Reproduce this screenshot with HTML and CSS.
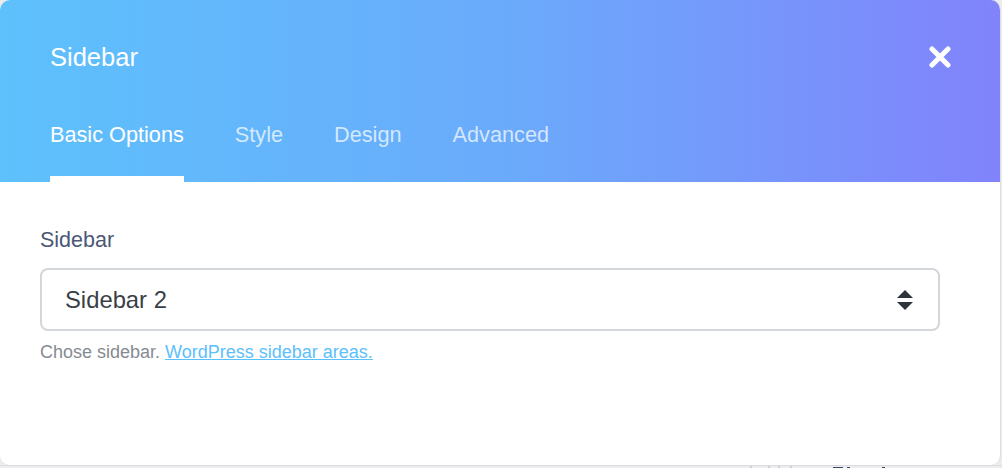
FILE: index.html
```html
<!DOCTYPE html>
<html>
<head>
<meta charset="utf-8">
<link rel="stylesheet" href="styles.css">
</head>
<body>
<div class="backdrop">
  <div class="behind">
    <span class="tick t1"></span><span class="tick t2"></span><span class="tick t3"></span><span class="tick t4"></span>
    <span class="ink i1"></span><span class="ink i2"></span><span class="ink i3"></span>
  </div>
  <div class="modal">
    <div class="header">
      <div class="title-row">
        <div class="title">Sidebar</div>
        <svg class="close" width="22" height="22" viewBox="0 0 22 22"><path d="M3 3 L19 19 M19 3 L3 19" stroke="#fff" stroke-width="5" stroke-linecap="round" fill="none"/></svg>
      </div>
      <div class="tabs">
        <div class="tab active">Basic Options</div>
        <div class="tab">Style</div>
        <div class="tab">Design</div>
        <div class="tab">Advanced</div>
      </div>
    </div>
    <div class="body">
      <div class="label">Sidebar</div>
      <div class="select">
        <span class="select-value">Sidebar 2</span>
        <svg class="arrows" width="18" height="22" viewBox="0 0 18 22"><path d="M9 1 L17 9 L1 9 Z M1 13 L17 13 L9 21 Z" fill="#2f343b"/></svg>
      </div>
      <div class="help">Chose sidebar. <a class="link" href="#">WordPress sidebar areas.</a></div>
    </div>
  </div>
</div>
</body>
</html>
```
FILE: styles.css
```css
html, body {
  margin: 0;
  padding: 0;
}
body {
  width: 1002px;
  height: 468px;
  overflow: hidden;
  background: #ececee;
  font-family: "Liberation Sans", Arial, sans-serif;
}
.backdrop {
  position: relative;
  width: 1002px;
  height: 468px;
}
.behind {
  position: absolute;
  left: 0;
  top: 465px;
  width: 1002px;
  height: 3px;
  border-top: 1px solid #dcdce0;
}
.tick {
  position: absolute;
  top: 0;
  width: 2px;
  height: 3px;
  background: #cfcfd4;
}
.t1 { left: 750px; }
.t2 { left: 768px; }
.t3 { left: 778px; }
.t4 { left: 790px; }
.ink {
  position: absolute;
  top: 1px;
  height: 2px;
  background: #3b4a6b;
}
.i1 { left: 833px; width: 10px; }
.i2 { left: 847px; width: 3px; }
.i3 { left: 882px; width: 3px; }
.modal {
  position: relative;
  width: 1000px;
  height: 465px;
  background: #fff;
  border-radius: 10px;
  overflow: hidden;
  border-right: 1px solid #dedede;
}
.header {
  height: 182px;
  background: linear-gradient(to right, #5dc1fc 0%, #6aabfb 50%, #8183fb 100%);
  padding: 0 50px;
  box-sizing: border-box;
  display: flex;
  flex-direction: column;
}
.title-row {
  height: 114px;
  display: flex;
  align-items: center;
  justify-content: space-between;
}
.title {
  color: #fff;
  font-size: 25.5px;
  line-height: 30px;
}
.close {
  margin-right: -1px;
  display: block;
}
.tabs {
  display: flex;
  gap: 51px;
  height: 68px;
}
.tab {
  color: rgba(255, 255, 255, 0.72);
  font-size: 21.7px;
  line-height: 26px;
  padding-top: 8px;
  padding-bottom: 28px;
  border-bottom: 6px solid transparent;
}
.tab.active {
  color: #fff;
  border-bottom-color: #fff;
}
.body {
  padding: 46px 40px 0;
}
.label {
  color: #4b5876;
  font-size: 21.5px;
  line-height: 24px;
}
.select {
  margin-top: 16px;
  width: 900px;
  height: 63px;
  box-sizing: border-box;
  border: 2px solid #d3d6db;
  border-radius: 8px;
  display: flex;
  align-items: center;
  justify-content: space-between;
  padding: 0 24px 0 23px;
}
.select-value {
  color: #3a3f47;
  font-size: 23.8px;
}
.arrows {
  display: block;
}
.help {
  margin-top: 10px;
  line-height: 22px;
  font-size: 18px;
  color: #868b92;
}
.link {
  color: #5cc0fb;
  text-decoration: underline;
}
```
